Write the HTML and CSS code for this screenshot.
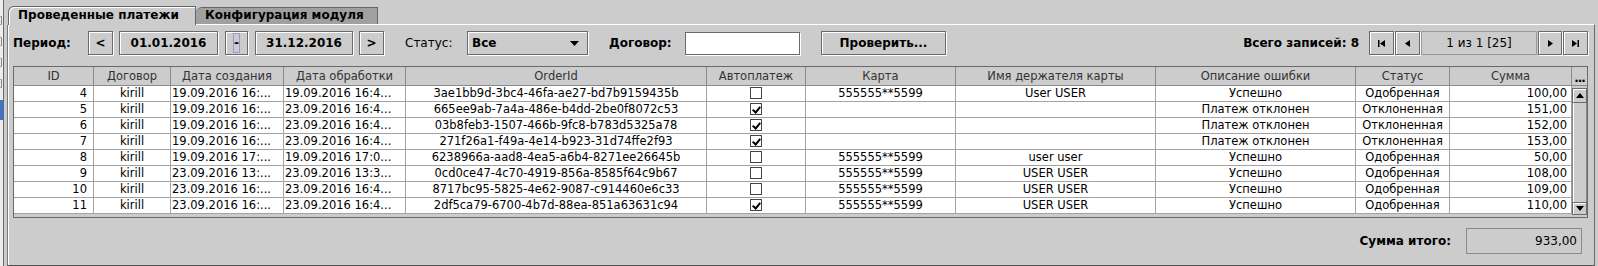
FILE: index.html
```html
<!DOCTYPE html>
<html lang="ru">
<head>
  <meta charset="UTF-8">
  <title>Проведенные платежи</title>
  <link rel="stylesheet" href="styles.css">
</head>
<body>
  <div class="window">
    <!-- edge of the window behind -->
    <div class="side">
      <div class="side-mark"></div>
      <div class="side-mark"></div>
      <div class="side-mark"></div>
      <div class="side-mark"></div>
      <div class="side-sel"></div>
    </div>

    <div class="main">
      <div class="tabs">
        <div class="tab tab-active">Проведенные платежи</div>
        <div class="tab tab-inactive">Конфигурация модуля</div>
      </div>

      <div class="panel">
        <!-- Filter bar -->
        <div class="toolbar">
          <span class="label label-period">Период:</span>
          <button class="btn btn-arrow">&lt;</button>
          <button class="btn btn-date">01.01.2016</button>
          <button class="btn btn-dash"><span class="focus">-</span></button>
          <button class="btn btn-date2">31.12.2016</button>
          <button class="btn btn-arrow btn-next">&gt;</button>

          <span class="label label-status">Статус:</span>
          <div class="combo">
            <span>Все</span>
            <svg width="9" height="5" viewBox="0 0 9 5"><polygon points="0,0 9,0 4.5,5" fill="#000"/></svg>
          </div>

          <span class="label label-contract">Договор:</span>
          <div class="field"></div>

          <button class="btn btn-check">Проверить...</button>

          <span class="spacer"></span>

          <span class="label label-total">Всего записей: 8</span>
          <div class="pager">
            <button class="btn btn-page">
              <svg width="7" height="7" viewBox="0 0 7 7"><rect x="0" y="0" width="1.5" height="7" fill="#000"/><polygon points="7,0 7,7 2,3.5" fill="#000"/></svg>
            </button>
            <button class="btn btn-page">
              <svg width="5" height="7" viewBox="0 0 5 7"><polygon points="5,0 5,7 0,3.5" fill="#000"/></svg>
            </button>
            <div class="page-info">1 из 1 [25]</div>
            <button class="btn btn-page btn-page-next">
              <svg width="5" height="7" viewBox="0 0 5 7"><polygon points="0,0 0,7 5,3.5" fill="#000"/></svg>
            </button>
            <button class="btn btn-page">
              <svg width="7" height="7" viewBox="0 0 7 7"><polygon points="0,0 0,7 5,3.5" fill="#000"/><rect x="5.5" y="0" width="1.5" height="7" fill="#000"/></svg>
            </button>
          </div>
        </div>

        <!-- Payments table -->
        <div class="grid">
          <div class="grid-view">
            <table class="grid-table">
              <colgroup>
                <col style="width: 80px">
                <col style="width: 77px">
                <col style="width: 113px">
                <col style="width: 122px">
                <col style="width: 301px">
                <col style="width: 99px">
                <col style="width: 150px">
                <col style="width: 200px">
                <col style="width: 200px">
                <col style="width: 94px">
                <col style="width: 122px">
              </colgroup>
              <thead>
                <tr>
                  <th>ID</th>
                  <th>Договор</th>
                  <th>Дата создания</th>
                  <th>Дата обработки</th>
                  <th>OrderId</th>
                  <th>Автоплатеж</th>
                  <th>Карта</th>
                  <th>Имя держателя карты</th>
                  <th>Описание ошибки</th>
                  <th>Статус</th>
                  <th>Сумма</th>
                </tr>
              </thead>
              <tbody>
                <tr>
                  <td class="c-id">4</td><td class="c-mid">kirill</td>
                  <td class="c-date">19.09.2016 16:...</td><td class="c-date">19.09.2016 16:4...</td>
                  <td class="c-mid">3ae1bb9d-3bc4-46fa-ae27-bd7b9159435b</td>
                  <td class="c-mid"><span class="cb"></span></td>
                  <td class="c-mid">555555**5599</td><td class="c-mid">User USER</td>
                  <td class="c-mid">Успешно</td><td class="c-mid">Одобренная</td><td class="c-sum">100,00</td>
                </tr>
                <tr>
                  <td class="c-id">5</td><td class="c-mid">kirill</td>
                  <td class="c-date">19.09.2016 16:...</td><td class="c-date">23.09.2016 16:4...</td>
                  <td class="c-mid">665ee9ab-7a4a-486e-b4dd-2be0f8072c53</td>
                  <td class="c-mid"><span class="cb cb-on"></span></td>
                  <td></td><td></td>
                  <td class="c-mid">Платеж отклонен</td><td class="c-mid">Отклоненная</td><td class="c-sum">151,00</td>
                </tr>
                <tr>
                  <td class="c-id">6</td><td class="c-mid">kirill</td>
                  <td class="c-date">19.09.2016 16:...</td><td class="c-date">23.09.2016 16:4...</td>
                  <td class="c-mid">03b8feb3-1507-466b-9fc8-b783d5325a78</td>
                  <td class="c-mid"><span class="cb cb-on"></span></td>
                  <td></td><td></td>
                  <td class="c-mid">Платеж отклонен</td><td class="c-mid">Отклоненная</td><td class="c-sum">152,00</td>
                </tr>
                <tr>
                  <td class="c-id">7</td><td class="c-mid">kirill</td>
                  <td class="c-date">19.09.2016 16:...</td><td class="c-date">23.09.2016 16:4...</td>
                  <td class="c-mid">271f26a1-f49a-4e14-b923-31d74ffe2f93</td>
                  <td class="c-mid"><span class="cb cb-on"></span></td>
                  <td></td><td></td>
                  <td class="c-mid">Платеж отклонен</td><td class="c-mid">Отклоненная</td><td class="c-sum">153,00</td>
                </tr>
                <tr>
                  <td class="c-id">8</td><td class="c-mid">kirill</td>
                  <td class="c-date">19.09.2016 17:...</td><td class="c-date">19.09.2016 17:0...</td>
                  <td class="c-mid">6238966a-aad8-4ea5-a6b4-8271ee26645b</td>
                  <td class="c-mid"><span class="cb"></span></td>
                  <td class="c-mid">555555**5599</td><td class="c-mid">user user</td>
                  <td class="c-mid">Успешно</td><td class="c-mid">Одобренная</td><td class="c-sum">50,00</td>
                </tr>
                <tr>
                  <td class="c-id">9</td><td class="c-mid">kirill</td>
                  <td class="c-date">23.09.2016 13:...</td><td class="c-date">23.09.2016 13:3...</td>
                  <td class="c-mid">0cd0ce47-4c70-4919-856a-8585f64c9b67</td>
                  <td class="c-mid"><span class="cb"></span></td>
                  <td class="c-mid">555555**5599</td><td class="c-mid">USER USER</td>
                  <td class="c-mid">Успешно</td><td class="c-mid">Одобренная</td><td class="c-sum">108,00</td>
                </tr>
                <tr>
                  <td class="c-id">10</td><td class="c-mid">kirill</td>
                  <td class="c-date">23.09.2016 16:...</td><td class="c-date">23.09.2016 16:4...</td>
                  <td class="c-mid">8717bc95-5825-4e62-9087-c914460e6c33</td>
                  <td class="c-mid"><span class="cb"></span></td>
                  <td class="c-mid">555555**5599</td><td class="c-mid">USER USER</td>
                  <td class="c-mid">Успешно</td><td class="c-mid">Одобренная</td><td class="c-sum">109,00</td>
                </tr>
                <tr>
                  <td class="c-id">11</td><td class="c-mid">kirill</td>
                  <td class="c-date">23.09.2016 16:...</td><td class="c-date">23.09.2016 16:4...</td>
                  <td class="c-mid">2df5ca79-6700-4b7d-88ea-851a63631c94</td>
                  <td class="c-mid"><span class="cb cb-on"></span></td>
                  <td class="c-mid">555555**5599</td><td class="c-mid">USER USER</td>
                  <td class="c-mid">Успешно</td><td class="c-mid">Одобренная</td><td class="c-sum">110,00</td>
                </tr>
              </tbody>
            </table>
          </div>

          <div class="vscroll">
            <div class="corner">...</div>
            <div class="sb-btn sb-up">
              <svg width="8" height="5" viewBox="0 0 8 5"><polygon points="0,5 8,5 4,0" fill="#000"/></svg>
            </div>
            <div class="sb-track"></div>
            <div class="sb-btn sb-down">
              <svg width="8" height="5" viewBox="0 0 8 5"><polygon points="0,0 8,0 4,5" fill="#000"/></svg>
            </div>
          </div>
        </div>

        <!-- Total -->
        <div class="footer">
          <span class="label label-sum">Сумма итого:</span>
          <div class="sum-field">933,00</div>
        </div>
      </div>
    </div>
  </div>
</body>
</html>
```

FILE: styles.css
```css
* {
  box-sizing: border-box;
}

body {
  margin: 0;
  background-color: #cccccc;
  font-family: "DejaVu Sans", "Liberation Sans", sans-serif;
  font-size: 12px;
  color: #000;
}

.window {
  display: flex;
  width: 1598px;
  height: 266px;
  overflow: hidden;
}

/* strip of the window behind */
.side {
  width: 4px;
  background-color: #ececec;
  border-right: 1px solid #6a6a6a;
  overflow: hidden;
  padding-top: 16px;
}

.side-mark {
  width: 2px;
  height: 9px;
  margin-bottom: 12px;
  border-right: 1px solid #888;
  border-top: 1px solid #aaa;
  border-bottom: 1px solid #aaa;
}

.side-sel {
  height: 20px;
  margin-top: 0;
  background-color: #3b74c8;
}

.main {
  flex: 1;
  display: flex;
  flex-direction: column;
  padding: 0 3px;
}

/* tabs */
.tabs {
  display: flex;
  align-items: flex-end;
  height: 24px;
  padding: 6px 0 0 1px;
}

.tab {
  font-weight: bold;
  padding-left: 9px;
  border: 1px solid #666;
  border-bottom: none;
  border-top-left-radius: 6px;
  white-space: nowrap;
}

.tab-active {
  position: relative;
  z-index: 1;
  width: 188px;
  height: 19px;
  line-height: 16px;
  margin-bottom: -1px;
  background-color: #cccccc;
  box-shadow: inset 1px 1px 0 #fff;
}

.tab-inactive {
  width: 182px;
  height: 17px;
  line-height: 15px;
  background-color: #a0a0a0;
  border-left: none;
}

.panel {
  flex: 1;
  display: flex;
  flex-direction: column;
  padding: 6px 6px 0 5px;
  border-top: 1px solid #fff;
  border-left: 1px solid #7a7a7a;
  border-right: 1px solid #6a6a6a;
  border-bottom: 1px solid #555;
  box-shadow: inset 1px 0 0 #fff;
}

/* filter bar */
.toolbar {
  display: flex;
  align-items: center;
  height: 24px;
}

.label {
  font-weight: bold;
  white-space: nowrap;
}

.label-period {
  width: 75px;
}

.label-status {
  width: 62px;
  margin-left: 21px;
  font-weight: normal;
}

.label-contract {
  width: 76px;
  margin-left: 21px;
}

.label-total {
  margin-right: 10px;
}

.label-sum {
  margin-right: 15px;
}

.spacer {
  flex: 1;
}

.btn {
  height: 24px;
  padding: 0;
  font-family: inherit;
  font-size: 12px;
  font-weight: bold;
  color: #000;
  background-color: #cccccc;
  border: 1px solid #6a6a6a;
  box-shadow: inset 1px 1px 0 #fff, 1px 1px 0 #fff;
  display: flex;
  align-items: center;
  justify-content: center;
}

.btn-arrow {
  width: 25px;
}

.btn-date {
  width: 99px;
  margin-left: 6px;
}

.btn-dash {
  width: 23px;
  margin-left: 7px;
}

.btn-date2 {
  width: 98px;
  margin-left: 7px;
}

.btn-next {
  margin-left: 6px;
}

.focus {
  display: inline-block;
  width: 7px;
  height: 20px;
  line-height: 19px;
  border: 1px solid #9999cc;
}

.btn-check {
  width: 125px;
  margin-left: 21px;
}

.combo {
  width: 121px;
  height: 24px;
  display: flex;
  align-items: center;
  justify-content: space-between;
  padding: 0 8px 0 4px;
  font-weight: bold;
  border: 1px solid #6a6a6a;
  box-shadow: inset 1px 1px 0 #fff, 1px 1px 0 #fff;
}

.field {
  width: 115px;
  height: 23px;
  background-color: #fff;
  border: 1px solid #6a6a6a;
  box-shadow: 1px 1px 0 #fff;
}

/* pager */
.pager {
  display: flex;
  gap: 1px;
}

.btn-page {
  width: 25px;
}

.page-info {
  width: 116px;
  height: 24px;
  line-height: 22px;
  text-align: center;
  border: 1px solid #999;
}

.btn-page-next {
  width: 24px;
}

/* table */
.grid {
  display: flex;
  height: 152px;
  margin-top: 11px;
  border: 1px solid #6a6a6a;
}

.grid-view {
  width: 1558px;
}

.grid-table {
  width: 1558px;
  table-layout: fixed;
  border-collapse: separate;
  border-spacing: 0;
  font-size: 11.5px;
}

.grid-table th {
  height: 19px;
  line-height: 18px;
  padding: 0 2px;
  font-weight: normal;
  color: #333;
  text-align: center;
  white-space: nowrap;
  overflow: hidden;
  background-color: #cccccc;
  border-right: 1px solid #8a8a8a;
  border-bottom: 1px solid #8a8a8a;
}

.grid-table td {
  line-height: 15px;
  padding: 0 1px;
  white-space: nowrap;
  overflow: hidden;
  background-color: #fff;
  border-right: 1px solid #a3a3a3;
  border-bottom: 1px solid #a3a3a3;
}

.grid-table td.c-id {
  text-align: right;
  padding-right: 6px;
}

.grid-table td.c-mid {
  text-align: center;
}

.grid-table td.c-sum {
  text-align: right;
  padding-right: 4px;
}

.cb {
  display: inline-block;
  vertical-align: middle;
  width: 12px;
  height: 12px;
  margin-top: -2px;
  background-color: #fff;
  border: 1px solid #444;
  box-shadow: 1px 1px 0 #fff;
}

.cb-on {
  position: relative;
}

.cb-on::after {
  content: "";
  position: absolute;
  left: 3px;
  top: 1px;
  width: 3px;
  height: 6px;
  border-right: 2px solid #000;
  border-bottom: 2px solid #000;
  transform: rotate(40deg);
}

/* vertical scrollbar */
.vscroll {
  width: 15px;
  display: flex;
  flex-direction: column;
}

.corner {
  height: 19px;
  line-height: 22px;
  font-weight: bold;
  text-align: center;
  letter-spacing: -1px;
  border-bottom: 1px solid #8a8a8a;
}

.sb-btn {
  display: flex;
  align-items: center;
  justify-content: center;
  border: 1px solid #6a6a6a;
  box-shadow: inset 1px 1px 0 #fff;
}

.sb-up {
  height: 15px;
  margin-top: 2px;
}

.sb-track {
  flex: 1;
  border: 1px solid #888;
  border-top: none;
  border-bottom: none;
  box-shadow: inset 1px 0 0 #fff;
}

.sb-down {
  height: 13px;
  margin-bottom: 2px;
}

/* total */
.footer {
  display: flex;
  justify-content: flex-end;
  align-items: center;
  margin-top: 10px;
  padding-right: 6px;
}

.sum-field {
  width: 116px;
  height: 26px;
  line-height: 24px;
  padding-right: 4px;
  text-align: right;
  border: 1px solid #8a8a8a;
}
```
